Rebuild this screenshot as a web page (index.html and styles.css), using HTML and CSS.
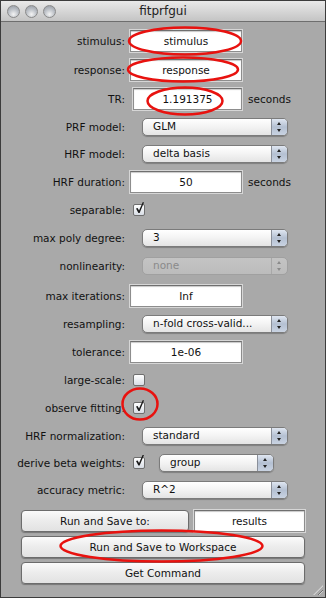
FILE: index.html
```html
<!DOCTYPE html>
<html lang="en">
<head>
    <meta charset="UTF-8">
    <title>fitprfgui</title>
    <link rel="stylesheet" href="styles.css">
</head>
<body>
    <div class="window">
        <div class="titlebar">
            <div class="lights">
                <span class="light"></span>
                <span class="light"></span>
                <span class="light"></span>
            </div>
            <div class="title">fitprfgui</div>
        </div>

        <div class="content">
            <div class="row row-f">
                <label class="lbl">stimulus:</label>
                <div class="field">stimulus</div>
            </div>
            <div class="row row-f">
                <label class="lbl">response:</label>
                <div class="field">response</div>
            </div>
            <div class="row row-f">
                <label class="lbl">TR:</label>
                <div class="field field-short">1.191375</div>
                <span class="unit">seconds</span>
            </div>
            <div class="row row-p">
                <label class="lbl">PRF model:</label>
                <div class="popup"><span class="popup-text">GLM</span><span class="arrows"></span></div>
            </div>
            <div class="row row-p">
                <label class="lbl">HRF model:</label>
                <div class="popup"><span class="popup-text">delta basis</span><span class="arrows"></span></div>
            </div>
            <div class="row row-f">
                <label class="lbl">HRF duration:</label>
                <div class="field">50</div>
                <span class="unit">seconds</span>
            </div>
            <div class="row row-c">
                <label class="lbl">separable:</label>
                <span class="check checked"></span>
            </div>
            <div class="row row-p">
                <label class="lbl">max poly degree:</label>
                <div class="popup"><span class="popup-text">3</span><span class="arrows"></span></div>
            </div>
            <div class="row row-p row-tall">
                <label class="lbl">nonlinearity:</label>
                <div class="popup disabled"><span class="popup-text">none</span><span class="arrows"></span></div>
            </div>
            <div class="row row-f">
                <label class="lbl">max iterations:</label>
                <div class="field">Inf</div>
            </div>
            <div class="row row-p">
                <label class="lbl">resampling:</label>
                <div class="popup"><span class="popup-text">n-fold cross-valid...</span><span class="arrows"></span></div>
            </div>
            <div class="row row-f">
                <label class="lbl">tolerance:</label>
                <div class="field">1e-06</div>
            </div>
            <div class="row row-c">
                <label class="lbl">large-scale:</label>
                <span class="check"></span>
            </div>
            <div class="row row-c">
                <label class="lbl">observe fitting:</label>
                <span class="check checked"></span>
            </div>
            <div class="row row-p">
                <label class="lbl">HRF normalization:</label>
                <div class="popup"><span class="popup-text">standard</span><span class="arrows"></span></div>
            </div>
            <div class="row row-p">
                <label class="lbl">derive beta weights:</label>
                <span class="check checked"></span>
                <div class="popup popup-small"><span class="popup-text">group</span><span class="arrows"></span></div>
            </div>
            <div class="row row-p">
                <label class="lbl">accuracy metric:</label>
                <div class="popup"><span class="popup-text">R^2</span><span class="arrows"></span></div>
            </div>

            <div class="buttons">
                <div class="btn-line">
                    <button class="btn btn-half">Run and Save to:</button>
                    <div class="field field-results">results</div>
                </div>
                <button class="btn">Run and Save to Workspace</button>
                <button class="btn">Get Command</button>
            </div>
        </div>

        <div class="grip"></div>

        <!-- red annotation marks drawn over the window -->
        <svg class="marks" width="326" height="598" viewBox="0 0 326 598">
            <ellipse cx="185" cy="41" rx="56" ry="13.5" />
            <ellipse cx="183" cy="69.5" rx="55" ry="12" />
            <ellipse cx="185" cy="101" rx="37.5" ry="13.5" />
            <ellipse cx="140" cy="404" rx="17.5" ry="15.5" />
            <ellipse cx="161.5" cy="546" rx="101" ry="15.5" />
        </svg>
    </div>
</body>
</html>
```

FILE: styles.css
```css
body {
    margin: 0;
    font-family: "DejaVu Sans", "Liberation Sans", sans-serif;
    font-size: 10.5px;
    color: #111;
}

.window {
    position: relative;
    width: 326px;
    height: 598px;
    box-sizing: border-box;
    border: 1px solid #3c3c3c;
    background-color: #a9a9a9;
    overflow: hidden;
}

.titlebar {
    height: 20px;
    background: linear-gradient(#e9e9e9, #c4c4c4);
    border-bottom: 1px solid #6e6e6e;
    display: flex;
    align-items: center;
    position: relative;
}

.lights {
    display: flex;
    gap: 5px;
    padding-left: 6px;
}

.light {
    width: 13px;
    height: 13px;
    border-radius: 50%;
    box-sizing: border-box;
    border: 1px solid #8a8a8a;
    background: radial-gradient(circle at 50% 75%, #f4f4f4 0%, #c2c6cc 45%, #8f959e 100%);
}

.title {
    position: absolute;
    left: 0;
    right: 0;
    text-align: center;
    font-size: 12px;
    color: #222;
}

.content {
    padding-top: 4px;
    display: flex;
    flex-direction: column;
}

.row {
    display: flex;
    align-items: center;
}

.row-f { height: 29px; }
.row-p { height: 27px; }
.row-c { height: 28px; }
.row-tall { height: 30px; }

.lbl {
    width: 124px;
    text-align: right;
    margin-right: 5px;
    flex-shrink: 0;
}

.field {
    width: 112px;
    height: 22px;
    box-sizing: border-box;
    background: #fff;
    border: 1px solid #8d8d8d;
    border-top-color: #6f6f6f;
    box-shadow: inset 0 1px 1px #c8c8c8, 0 0 0 1px #d6d6d6;
    display: flex;
    align-items: center;
    justify-content: center;
    font-size: 10.5px;
}

.field-short {
    width: 109px;
    margin-left: 3px;
}

.unit {
    margin-left: 6px;
}

.popup {
    margin-left: 12px;
    width: 146px;
    height: 18px;
    box-sizing: border-box;
    border: 1px solid #7b7b7b;
    border-radius: 5px;
    background: linear-gradient(#ffffff, #f3f3f3 50%, #e4e4e4);
    box-shadow: 0 1px 1px rgba(0, 0, 0, 0.25);
    display: flex;
    align-items: stretch;
    overflow: hidden;
}

.popup-text {
    flex: 1;
    padding-left: 10px;
    line-height: 14px;
    white-space: nowrap;
}

.arrows {
    width: 15px;
    border-left: 1px solid #8a8f99;
    background: linear-gradient(#dfe6f1, #b4c0d2 50%, #c9d3e2);
    position: relative;
}

.arrows::before,
.arrows::after {
    content: "";
    position: absolute;
    left: 5px;
    border-left: 2.5px solid transparent;
    border-right: 2.5px solid transparent;
}

.arrows::before {
    top: 3px;
    border-bottom: 3.5px solid #222;
}

.arrows::after {
    bottom: 3px;
    border-top: 3.5px solid #222;
}

.popup.disabled {
    border-color: #a0a0a0;
    background: linear-gradient(#c4c4c4, #bcbcbc);
    box-shadow: none;
    color: #8a8a8a;
}

.popup.disabled .arrows {
    background: transparent;
    border-left-color: #a8a8a8;
}

.popup.disabled .arrows::before { border-bottom-color: #8a8a8a; }
.popup.disabled .arrows::after { border-top-color: #8a8a8a; }

.popup-small {
    width: 115px;
    margin-left: 14px;
}

.check {
    width: 12px;
    height: 12px;
    margin-left: 3px;
    box-sizing: border-box;
    border: 1px solid #6f6f6f;
    border-radius: 2px;
    background: linear-gradient(#ffffff, #d8dde5);
    position: relative;
    flex-shrink: 0;
}

.check.checked::after {
    content: "";
    position: absolute;
    left: 2px;
    top: -3px;
    width: 8px;
    height: 11px;
    background: #1a1a1a;
    clip-path: polygon(0 60%, 20% 55%, 38% 78%, 85% 0, 100% 5%, 45% 100%, 30% 100%);
}

.buttons {
    margin-top: 7px;
    padding: 0 20px;
    display: flex;
    flex-direction: column;
    gap: 4px;
}

.btn-line {
    display: flex;
    gap: 5px;
}

.btn {
    height: 22px;
    width: 100%;
    border: 1px solid #6c6c6c;
    border-radius: 4px;
    background: linear-gradient(#fbfbfb, #ececec 50%, #e2e2e2);
    box-shadow: 0 1px 1px rgba(0, 0, 0, 0.3);
    font-family: inherit;
    font-size: 10.5px;
    color: #111;
    padding: 0;
}

.btn-half {
    width: 168px;
}

.field-results {
    width: 111px;
}

.grip {
    position: absolute;
    right: 2px;
    bottom: 2px;
    width: 10px;
    height: 10px;
    background: repeating-linear-gradient(135deg, transparent 0 2px, #6e6e6e 2px 3px, #d0d0d0 3px 4px);
    clip-path: polygon(100% 0, 100% 100%, 0 100%);
}

.marks {
    position: absolute;
    left: -1px;
    top: -1px;
    pointer-events: none;
}

.marks ellipse {
    fill: none;
    stroke: #e8120f;
    stroke-width: 2.5;
}
```
